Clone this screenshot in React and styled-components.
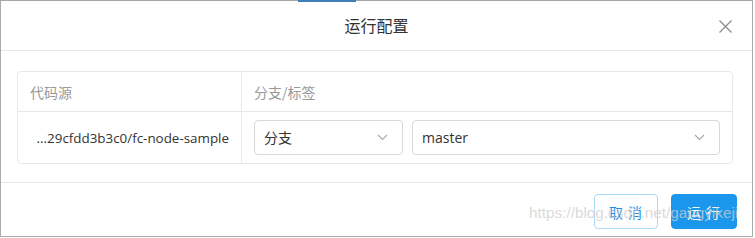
import React from "react";
import styled, { createGlobalStyle } from "styled-components";

const GlobalStyle = createGlobalStyle`
  html, body {
    margin: 0;
    padding: 0;
    background: #fff;
  }
  body {
    font-family: "Open Sans", "Noto Sans CJK SC", sans-serif;
    color: #333;
  }
`;

const ChevronDown = () => (
  <svg width="11" height="7" viewBox="0 0 11 7" fill="none">
    <path d="M1 1l4.5 4.5L10 1" stroke="#a8a8a8" strokeWidth="1.1" />
  </svg>
);

const CloseIcon = () => (
  <svg width="13" height="13" viewBox="0 0 13 13" fill="none">
    <path d="M0.5 0.5l12 12M12.5 0.5l-12 12" stroke="#8c8c8c" strokeWidth="1.3" />
  </svg>
);

const App = () => {
  return (
    <>
      <GlobalStyle />
      <Modal>
        <Header>
          <Title>运行配置</Title>
          <Close>
            <CloseIcon />
          </Close>
        </Header>
        <Body>
          <Table>
            <HeadRow>
              <SourceCell>代码源</SourceCell>
              <BranchCell>分支/标签</BranchCell>
            </HeadRow>
            <DataRow>
              <SourceCell $align="right">...29cfdd3b3c0/fc-node-sample</SourceCell>
              <BranchCell>
                <Select $width={149}>
                  <span>分支</span>
                  <ChevronDown />
                </Select>
                <Select $grow>
                  <span>master</span>
                  <ChevronDown />
                </Select>
              </BranchCell>
            </DataRow>
          </Table>
        </Body>
        <Footer>
          <Button>取 消</Button>
          <Button $primary>运 行</Button>
        </Footer>
        <Watermark>https://blog.csdn.net/gangyikeji</Watermark>
      </Modal>
    </>
  );
};
export default App;

const Modal = styled.div`
  position: relative;
  box-sizing: border-box;
  width: 753px;
  height: 237px;
  border: 1px solid #ababab;
  border-top-color: #a6a6a6;
  background: #fff;
  display: flex;
  flex-direction: column;
  &:before {
    content: "";
    position: absolute;
    top: -1px;
    left: 297px;
    width: 58px;
    height: 2px;
    background: #3d7fb6;
  }
`;

const Header = styled.div`
  position: relative;
  height: 49px;
  border-bottom: 1px solid #e8e8e8;
  display: flex;
  align-items: center;
  justify-content: center;
`;

const Title = styled.div`
  font-family: "Noto Sans CJK SC", sans-serif;
  font-size: 16px;
  color: #333;
  margin-top: -2px;
`;

const Close = styled.div`
  position: absolute;
  right: 20px;
  top: 19px;
  display: flex;
`;

const Body = styled.div`
  padding: 20px 19px 18px 16px;
  border-bottom: 1px solid #e8e8e8;
`;

const Table = styled.div`
  border: 1px solid #e8e8e8;
  border-radius: 4px;
  display: flex;
  flex-direction: column;
`;

const HeadRow = styled.div`
  display: flex;
  height: 39px;
  border-bottom: 1px solid #e8e8e8;
  color: #999;
  font-size: 14px;
  font-family: "Noto Sans CJK SC", sans-serif;
`;

const DataRow = styled.div`
  display: flex;
  height: 51px;
  font-size: 14px;
  color: #333;
`;

const SourceCell = styled.div`
  box-sizing: border-box;
  width: 224px;
  padding: 0 12px;
  border-right: 1px solid #e8e8e8;
  display: flex;
  align-items: center;
  justify-content: ${(p) => (p.$align === "right" ? "flex-end" : "flex-start")};
  font-size: ${(p) => (p.$align === "right" ? "13.4px" : "14px")};
  white-space: nowrap;
  overflow: hidden;
`;

const BranchCell = styled.div`
  flex: 1;
  padding: 0 12px;
  display: flex;
  align-items: center;
  gap: 9px;
`;

const Select = styled.div`
  box-sizing: border-box;
  height: 35px;
  width: ${(p) => (p.$width ? `${p.$width}px` : "auto")};
  flex: ${(p) => (p.$grow ? 1 : "none")};
  border: 1px solid #d9d9d9;
  border-radius: 4px;
  padding: 0 14px 0 9px;
  display: flex;
  align-items: center;
  justify-content: space-between;
  font-family: "Open Sans", "Noto Sans CJK SC", sans-serif;
  font-size: 14px;
  color: #333;
  margin-top: -1px;
`;

const Footer = styled.div`
  flex: 1;
  display: flex;
  justify-content: flex-end;
  align-items: flex-start;
  gap: 13px;
  padding: 11px 15px 0 0;
`;

const Button = styled.div`
  box-sizing: border-box;
  height: 35px;
  width: ${(p) => (p.$primary ? "66px" : "64px")};
  border-radius: 4px;
  border: 1px solid ${(p) => (p.$primary ? "#1a97ec" : "#a9dafb")};
  background: ${(p) => (p.$primary ? "#1a97ec" : "#fff")};
  color: ${(p) => (p.$primary ? "#fff" : "#1a8fe6")};
  font-family: "Noto Sans CJK SC", sans-serif;
  font-size: 14px;
  letter-spacing: 1px;
  display: flex;
  align-items: center;
  justify-content: center;
  white-space: pre;
`;

const Watermark = styled.div`
  position: absolute;
  z-index: 2;
  left: 528px;
  top: 203px;
  font-family: "Liberation Sans", Arial, sans-serif;
  font-size: 15.3px;
  color: rgba(205, 205, 205, 0.75);
  white-space: nowrap;
  pointer-events: none;
`;
